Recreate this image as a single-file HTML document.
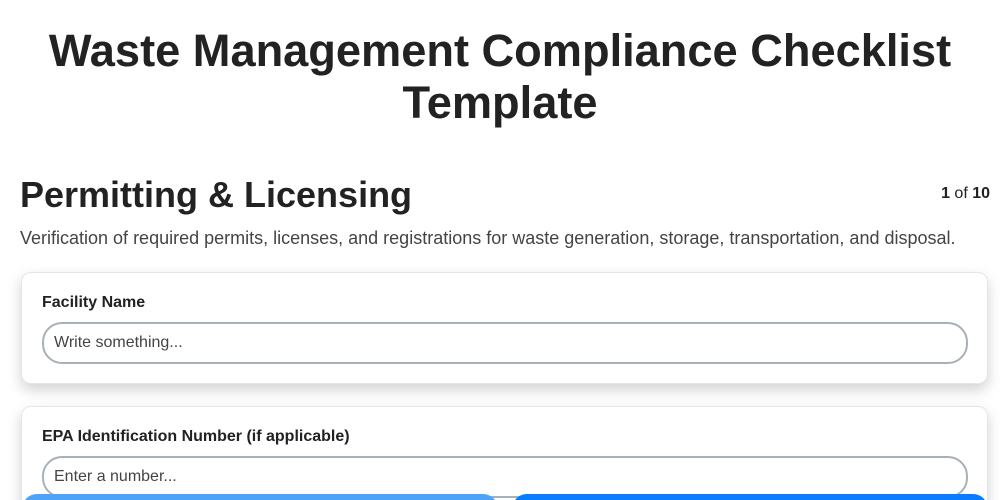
<!DOCTYPE html>
<html><head><style>
html,body{margin:0;width:1000px;height:500px;overflow:hidden}
body{background:#fff;font-family:"Liberation Sans",sans-serif;color:#222;position:relative}
h1{margin:0;position:absolute;top:25px;left:0;width:1000px;text-align:center;font-size:45.2px;line-height:52px;font-weight:bold;color:#222}
h2{margin:0;position:absolute;top:173px;left:20px;font-size:36px;font-weight:bold;line-height:44px}
.cnt{position:absolute;top:185px;right:10px;font-size:16px}
.desc{position:absolute;top:228px;left:20px;font-size:18px;color:#444}
.card{position:absolute;left:21px;width:945px;background:#fff;border:1px solid #e6e6ea;border-radius:10px;box-shadow:0 6px 14px rgba(0,0,0,.18);padding:0 10px}
.card label{position:absolute;left:20px;font-weight:bold;font-size:16px}
.inp{position:absolute;left:20px;border:2px solid #a8b0b8;border-radius:20px;font-size:16px;color:#444;line-height:38px;padding-left:10px;box-sizing:border-box;width:926px;height:42px}
.btn{position:absolute;top:494px;height:30px;border-radius:16px}
</style></head><body>
<h1>Waste Management Compliance Checklist<br>Template</h1>
<h2>Permitting &amp; Licensing</h2>
<div class="cnt"><b>1</b> of <b>10</b></div>
<div class="desc">Verification of required permits, licenses, and registrations for waste generation, storage, transportation, and disposal.</div>
<div class="card" style="top:272px;height:110px"><label style="top:21px">Facility Name</label><div class="inp" style="top:49px">Write something...</div></div>
<div class="card" style="top:406px;height:110px"><label style="top:21px">EPA Identification Number (if applicable)</label><div class="inp" style="top:49px">Enter a number...</div></div>
<div class="btn" style="left:22px;width:476px;background:#4da3f8"></div>
<div class="btn" style="left:512px;width:476px;background:#0a7cff"></div>
</body></html>
